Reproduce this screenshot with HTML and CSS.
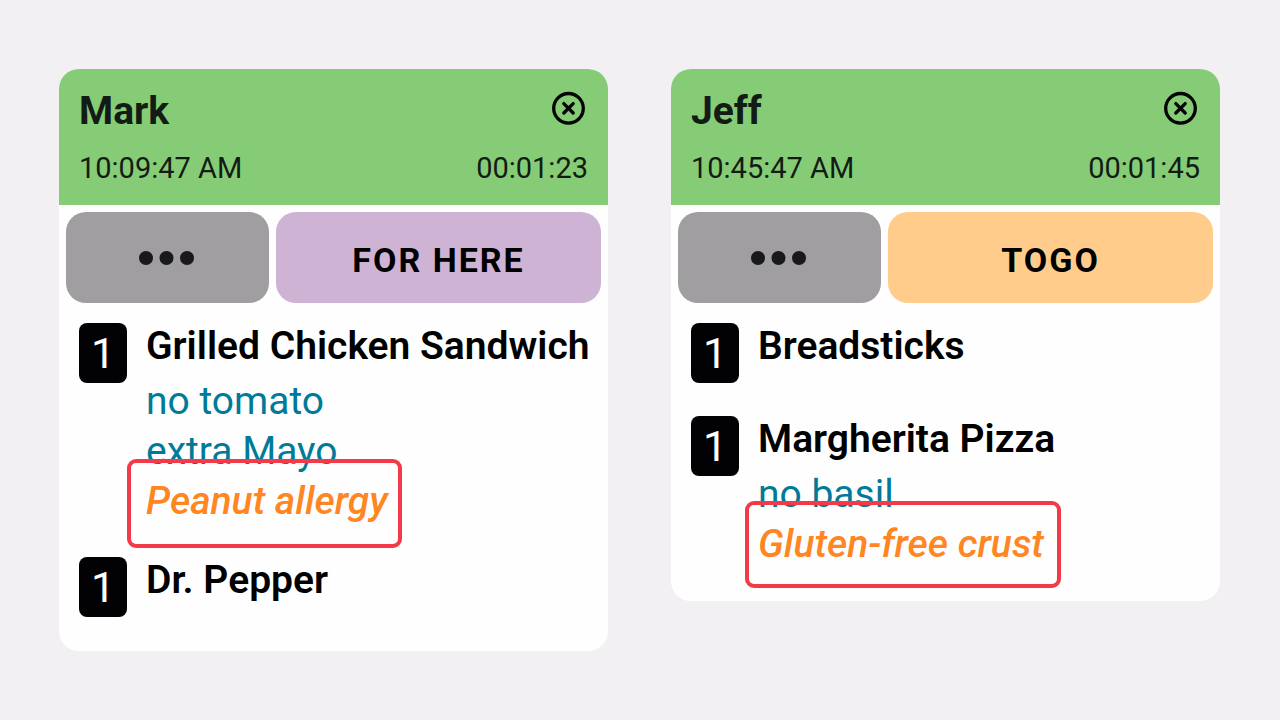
FILE: index.html
```html
<!DOCTYPE html>
<html lang="en">
<head>
    <meta charset="UTF-8">
    <meta name="viewport" content="width=device-width, initial-scale=1.0">
    <title>Kitchen Orders</title>
    <link rel="stylesheet" href="styles.css">
</head>
<body>
    <main class="orders">
        <article class="order">
            <header class="order-header">
                <div class="header-row">
                    <h2>Mark</h2>
                    <button type="button" class="close" aria-label="Close order">
                        <svg viewBox="0 0 40 40" width="40" height="40">
                            <circle cx="20.5" cy="19.3" r="14.8"/>
                            <path d="M15.8 14.6l9.4 9.4M25.2 14.6l-9.4 9.4"/>
                        </svg>
                    </button>
                </div>
                <div class="header-row times">
                    <time>10:09:47 AM</time>
                    <span>00:01:23</span>
                </div>
            </header>

            <div class="actions">
                <button type="button" class="more" aria-label="More options">
                    <svg viewBox="0 0 58 14" width="58" height="14">
                        <circle cx="7" cy="7" r="7"/>
                        <circle cx="27.5" cy="7" r="7"/>
                        <circle cx="48" cy="7" r="7"/>
                    </svg>
                </button>
                <button type="button" class="type for-here">FOR HERE</button>
            </div>

            <div class="items">
                <section class="item">
                    <span class="qty">1</span>
                    <div class="details">
                        <h3>Grilled Chicken Sandwich</h3>
                        <ul>
                            <li>no tomato</li>
                            <li>extra Mayo</li>
                            <li class="allergy peanut">Peanut allergy</li>
                        </ul>
                    </div>
                </section>
                <section class="item">
                    <span class="qty">1</span>
                    <div class="details">
                        <h3>Dr. Pepper</h3>
                    </div>
                </section>
            </div>
        </article>

        <article class="order">
            <header class="order-header">
                <div class="header-row">
                    <h2>Jeff</h2>
                    <button type="button" class="close" aria-label="Close order">
                        <svg viewBox="0 0 40 40" width="40" height="40">
                            <circle cx="20.5" cy="19.3" r="14.8"/>
                            <path d="M15.8 14.6l9.4 9.4M25.2 14.6l-9.4 9.4"/>
                        </svg>
                    </button>
                </div>
                <div class="header-row times">
                    <time>10:45:47 AM</time>
                    <span>00:01:45</span>
                </div>
            </header>

            <div class="actions">
                <button type="button" class="more" aria-label="More options">
                    <svg viewBox="0 0 58 14" width="58" height="14">
                        <circle cx="7" cy="7" r="7"/>
                        <circle cx="27.5" cy="7" r="7"/>
                        <circle cx="48" cy="7" r="7"/>
                    </svg>
                </button>
                <button type="button" class="type togo">TOGO</button>
            </div>

            <div class="items">
                <section class="item">
                    <span class="qty">1</span>
                    <div class="details">
                        <h3>Breadsticks</h3>
                    </div>
                </section>
                <section class="item">
                    <span class="qty">1</span>
                    <div class="details">
                        <h3>Margherita Pizza</h3>
                        <ul>
                            <li>no basil</li>
                            <li class="allergy gluten">Gluten-free crust</li>
                        </ul>
                    </div>
                </section>
            </div>
        </article>
    </main>
</body>
</html>
```
FILE: styles.css
```css
* {
    box-sizing: border-box;
}

body {
    margin: 0;
    background-color: #f3f0f4;
    font-family: Roboto, "Liberation Sans", sans-serif;
    color: #000;
}

h2, h3, ul {
    margin: 0;
    padding: 0;
}

button {
    border: none;
    padding: 0;
    font-family: inherit;
    cursor: pointer;
}

.orders {
    display: grid;
    grid-template-columns: repeat(2, minmax(0, 1fr));
    align-items: start;
    gap: 63px;
    padding: 69px 60px 60px 59px;
}

.order {
    background-color: #fefefe;
    border-radius: 20px;
}

.order-header {
    display: flex;
    flex-direction: column;
    gap: 18px;
    padding: 20px;
    background-color: #86cc76;
    border-radius: 20px 20px 0 0;
    color: #121c15;
}

.header-row {
    display: flex;
    justify-content: space-between;
    align-items: flex-start;
}

.header-row h2 {
    font-size: 39px;
    font-weight: 700;
    line-height: 44px;
}

.times {
    font-size: 29px;
    line-height: 34px;
}

.close {
    background: none;
}

.close svg {
    display: block;
    fill: none;
    stroke: #020403;
    stroke-width: 3.3;
    stroke-linecap: round;
}

.actions {
    display: flex;
    gap: 7px;
    padding: 7px 7px 0;
}

.actions button {
    height: 91px;
    padding-top: 4px;
    border-radius: 20px;
}

.more {
    flex: 5 1 0;
    background-color: #a09ea0;
}

.more svg {
    fill: #19181a;
}

.type {
    flex: 8 1 0;
    font-size: 34px;
    font-weight: 700;
    letter-spacing: 2px;
    color: #000;
}

.for-here {
    background-color: #ceb3d4;
}

.togo {
    background-color: #ffcc8b;
}

.items {
    display: flex;
    flex-direction: column;
    gap: 31px;
    padding: 20px 20px 32px;
}

.item {
    display: flex;
    align-items: flex-start;
    gap: 19px;
    min-height: 62px;
}

.qty {
    flex: none;
    width: 48px;
    border-radius: 8px;
    background-color: #020103;
    color: #fff;
    font-size: 43px;
    line-height: 60px;
    text-align: center;
}

.details {
    white-space: nowrap;
}

.details h3 {
    font-size: 39px;
    font-weight: 600;
    line-height: 47px;
}

.details ul {
    padding-top: 6px;
    list-style: none;
}

.details li {
    width: max-content;
    font-size: 39px;
    line-height: 50px;
    color: #007a99;
}

.details .allergy {
    position: relative;
    font-style: italic;
    font-weight: 500;
    color: #ff8622;
}

/* red callout drawn over the allergy line */
.allergy::after {
    content: "";
    position: absolute;
    border: 4px solid #f23a48;
    border-radius: 9px;
}

.peanut::after {
    inset: -17px -14px -22px -19px;
}

.gluten::after {
    inset: -18px -17px -19px -13px;
}
```
